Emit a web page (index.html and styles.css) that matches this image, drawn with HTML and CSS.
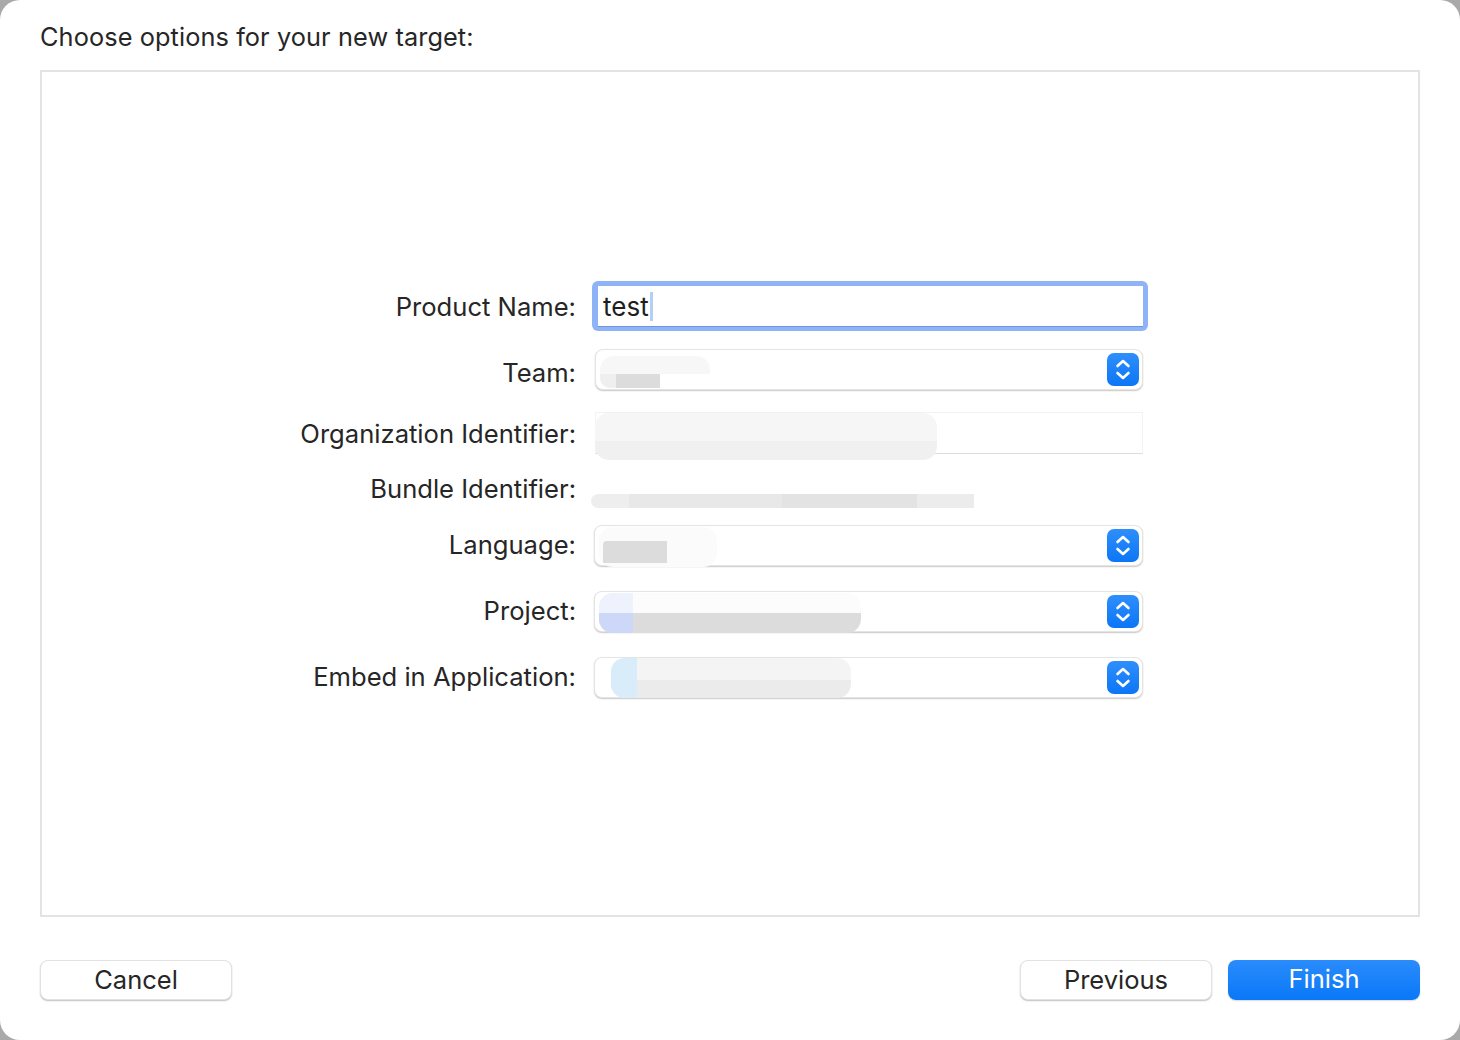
FILE: index.html
```html
<!DOCTYPE html>
<html>
<head>
<meta charset="utf-8">
<title>Choose options for your new target</title>
<link rel="stylesheet" href="styles.css">
</head>
<body>
<div class="window">
  <div class="title">Choose options for your new target:</div>
  <div class="panel">
    <div class="form">
      <div class="row r-name">
        <div class="label">Product Name:</div>
        <div class="focus-ring">
          <div class="textfield"><span class="value">test</span><span class="caret"></span></div>
        </div>
      </div>
      <div class="row r-team">
        <div class="label">Team:</div>
        <div class="popup">
          <div class="blur b-team"><span class="px px-a"></span><span class="px px-b"></span></div>
          <div class="stepper"><svg viewBox="0 0 32 33" width="32" height="33"><path d="M10.5 13 L16 8 L21.5 13" /><path d="M10.5 20 L16 25 L21.5 20" /></svg></div>
        </div>
      </div>
      <div class="row r-org">
        <div class="label">Organization Identifier:</div>
        <div class="orgfield">
          <div class="blur b-org"></div>
        </div>
      </div>
      <div class="row r-bundle">
        <div class="label">Bundle Identifier:</div>
        <div class="bundle">
          <div class="blur b-bundle"></div>
        </div>
      </div>
      <div class="row r-lang">
        <div class="label">Language:</div>
        <div class="popup">
          <div class="blur b-lang"><span class="px px-c"></span></div>
          <div class="stepper"><svg viewBox="0 0 32 33" width="32" height="33"><path d="M10.5 13 L16 8 L21.5 13" /><path d="M10.5 20 L16 25 L21.5 20" /></svg></div>
        </div>
      </div>
      <div class="row r-proj">
        <div class="label">Project:</div>
        <div class="popup">
          <div class="blur b-proj"><span class="px px-icon1"></span></div>
          <div class="stepper"><svg viewBox="0 0 32 33" width="32" height="33"><path d="M10.5 13 L16 8 L21.5 13" /><path d="M10.5 20 L16 25 L21.5 20" /></svg></div>
        </div>
      </div>
      <div class="row r-embed">
        <div class="label">Embed in Application:</div>
        <div class="popup">
          <div class="blur b-embed"><span class="px px-icon2"></span></div>
          <div class="stepper"><svg viewBox="0 0 32 33" width="32" height="33"><path d="M10.5 13 L16 8 L21.5 13" /><path d="M10.5 20 L16 25 L21.5 20" /></svg></div>
        </div>
      </div>
    </div>
  </div>
  <div class="buttons">
    <div class="btn">Cancel</div>
    <div class="spacer"></div>
    <div class="btn">Previous</div>
    <div class="btn primary">Finish</div>
  </div>
</div>
</body>
</html>
```

FILE: styles.css
```css
html, body {
  margin: 0;
  padding: 0;
  background: #a9a9a9;
}
body {
  font-family: "Inter", "Roboto", "Liberation Sans", sans-serif;
  color: #262626;
}
.window {
  width: 1460px;
  height: 1040px;
  background: #ffffff;
  border-radius: 20px;
  box-sizing: border-box;
  padding: 0 40px 0 40px;
  display: flex;
  flex-direction: column;
  overflow: hidden;
}
.title {
  font-size: 25.3px;
  line-height: 30px;
  margin-top: 22px;
  height: 30px;
  letter-spacing: 0.1px;
}
.panel {
  margin-top: 18px;
  height: 847px;
  box-sizing: border-box;
  border: 2px solid #e3e3e3;
  background: #ffffff;
}
.form {
  padding-top: 209px;
  display: flex;
  flex-direction: column;
}
.row {
  display: flex;
  align-items: center;
}
.label {
  width: 534px;
  text-align: right;
  font-size: 25.6px;
  line-height: 30px;
  flex: none;
}
.r-name { height: 50px; }
.r-name .label { margin-top: 2px; }
.r-team { height: 42px; margin-top: 17px; }
.r-team .label { margin-top: 7px; }
.r-org { height: 42px; margin-top: 22px; }
.r-org .label { margin-top: 2px; }
.r-bundle { height: 36px; margin-top: 18px; }
.r-bundle .label { margin-top: -3px; }
.r-lang { height: 42px; margin-top: 16px; }
.r-proj { height: 42px; margin-top: 24px; }
.r-embed { height: 42px; margin-top: 24px; }

.focus-ring {
  margin-left: 16px;
  width: 556px;
  height: 50px;
  box-sizing: border-box;
  border-radius: 6px;
  background: #8fb3f7;
  padding: 5px 5px 4px 6px;
}
.textfield {
  height: 100%;
  background: #ffffff;
  box-sizing: border-box;
  border-bottom: 1px solid #6f94e0;
  display: flex;
  align-items: center;
  padding-left: 5px;
  font-size: 26px;
  color: #1e1e1e;
}
.caret {
  display: inline-block;
  width: 3px;
  height: 29px;
  margin-left: 1px;
  background: #b6cdf8;
}
.popup {
  margin-left: 19px;
  width: 548px;
  height: 41px;
  box-sizing: border-box;
  border-radius: 8px;
  background: #ffffff;
  border: 1px solid #e4e4e4;
  box-shadow: 0 1px 1.5px rgba(0,0,0,0.22);
  display: flex;
  align-items: center;
  padding: 0 3px 0 4px;
}
.r-lang .popup, .r-proj .popup, .r-embed .popup { margin-left: 18px; width: 549px; }
.stepper {
  margin-left: auto;
  width: 32px;
  height: 33px;
  border-radius: 7px;
  background: linear-gradient(#2f8efc, #0b76f7);
  display: flex;
}
.stepper path {
  fill: none;
  stroke: #ffffff;
  stroke-width: 2.6;
  stroke-linecap: round;
  stroke-linejoin: round;
}
.orgfield {
  margin-left: 19px;
  width: 548px;
  height: 42px;
  box-sizing: border-box;
  border: 1px solid #f2f2f2;
  border-bottom: 1.5px solid #dcdcdc;
  display: flex;
  align-items: flex-end;
}
.bundle {
  margin-left: 15px;
  width: 552px;
  height: 36px;
  display: flex;
  align-items: flex-end;
}
.blur {
  border-radius: 14px;
}
.b-team {
  width: 110px;
  height: 32px;
  margin-top: 6px;
  background: linear-gradient(#f7f7f7 0 55%, #ffffff 55%);
  position: relative;
}
.px { position: absolute; display: block; }
.px-a { left: 0; bottom: 0; width: 16px; height: 14px; background: #efefef; border-bottom-left-radius: 10px; }
.px-b { left: 16px; bottom: 0; width: 44px; height: 14px; background: #dcdcdc; }
.b-org {
  width: 342px;
  height: 47px;
  margin-bottom: -7px;
  margin-left: -1px;
  background: linear-gradient(#f6f6f6 0 60%, #f0f0f0 60%);
  border-radius: 14px;
}
.b-bundle {
  width: 383px;
  height: 14px;
  margin-bottom: 0;
  background: linear-gradient(90deg, #eeeeee 0 10%, #e8e8e8 10% 50%, #e3e3e3 50% 85%, #ececec 85%);
  border-radius: 12px 0 0 12px;
}
.b-lang {
  width: 118px;
  height: 40px;
  margin-top: 4px;
  background: #fbfbfb;
  position: relative;
}
.px-c { left: 4px; top: 14px; width: 64px; height: 22px; background: #dcdcdc; border-radius: 4px 0 0 0; }
.b-proj {
  width: 262px;
  height: 40px;
  margin-top: 4px;
  background: linear-gradient(#fcfcfc 0 50%, #dcdcdc 50%);
  position: relative;
  border-radius: 14px;
}
.px-icon1 { left: 0; top: 0; width: 34px; height: 40px; background: linear-gradient(#eef2fd 0 50%, #cdd8f8 50%); border-radius: 14px 0 0 14px; }
.b-embed {
  width: 240px;
  height: 40px;
  margin-left: 12px;
  margin-top: 2px;
  background: linear-gradient(#f4f4f4 0 55%, #ebebeb 55%);
  position: relative;
  border-radius: 14px;
}
.px-icon2 { left: 0; top: 0; width: 26px; height: 40px; background: #d9ecfa; border-radius: 14px 0 0 14px; }

.buttons {
  display: flex;
  margin-top: 43px;
  gap: 16px;
}
.spacer { flex: 1; }
.btn {
  width: 192px;
  height: 40px;
  box-sizing: border-box;
  border-radius: 8px;
  background: #ffffff;
  border: 1px solid #e2e2e2;
  box-shadow: 0 1px 1.5px rgba(0,0,0,0.25);
  font-size: 25.5px;
  line-height: 37px;
  text-align: center;
  color: #262626;
}
.btn.primary {
  width: 192px;
  border: none;
  background: linear-gradient(#2a8cfc, #0a78f8);
  color: #ffffff;
  box-shadow: 0 1px 1.5px rgba(0,0,0,0.15);
}
```
